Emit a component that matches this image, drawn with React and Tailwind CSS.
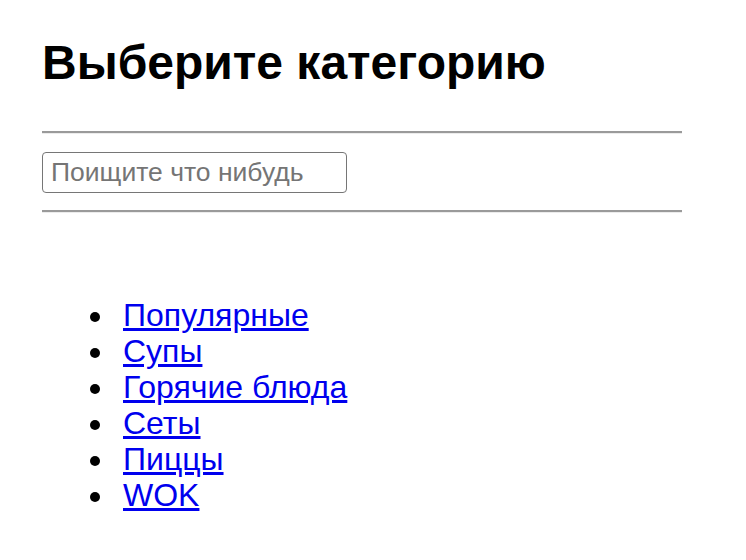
import React, { useState } from 'react';

const categories = ['Популярные', 'Супы', 'Горячие блюда', 'Сеты', 'Пиццы', 'WOK'];

const App = () => {
  const [query, setQuery] = useState('');

  return (
    <div className="px-[42px] pt-[36px] bg-white text-black font-['Liberation_Sans',Arial,sans-serif]">
      <h1 className="text-[48px] leading-[54px] font-bold">Выберите категорию</h1>

      <hr className="mt-[41px] w-[640px] border-t-2 border-t-[#9a9a9a] border-b border-b-[#ececec]" />

      {/* Search */}
      <input
        type="text"
        value={query}
        onChange={(e) => setQuery(e.target.value)}
        placeholder="Поищите что нибудь"
        className="mt-[18px] block w-[305px] h-[41px] px-[8px] text-[26.5px] border-[1.5px] border-[#767676] rounded-[4px] placeholder:text-[#757575] outline-none"
      />

      <hr className="mt-[17px] w-[640px] border-t-2 border-t-[#9a9a9a] border-b border-b-[#ececec]" />

      {/* Category list */}
      <ul className="mt-[84px] pl-[48px] text-[32px] leading-[36px]">
        {categories.map((name) => (
          <li key={name} className="flex items-center">
            <span className="w-[10px] h-[10px] mt-[4px] rounded-full bg-black" />
            <a href="#" className="ml-[23px] text-[#0000ee] underline">{name}</a>
          </li>
        ))}
      </ul>
    </div>
  );
};

export default App;
